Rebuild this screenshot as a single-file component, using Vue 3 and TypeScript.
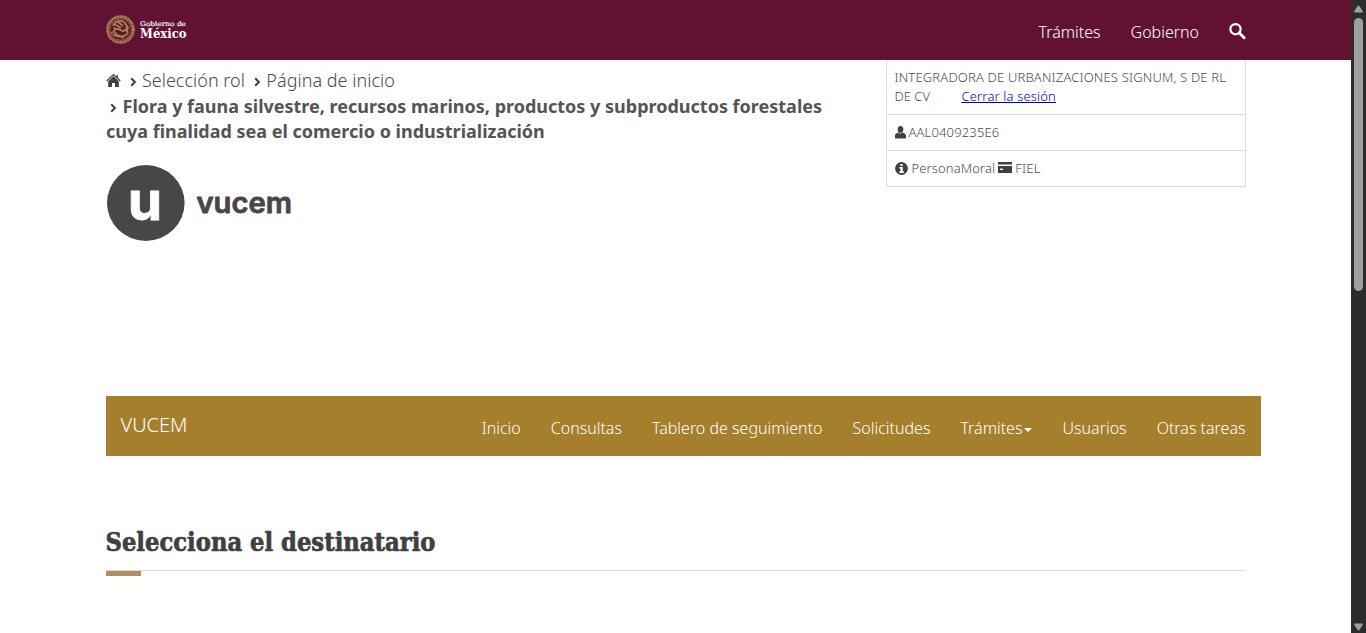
<script setup lang="ts">
interface NavItem {
  label: string
  dropdown?: boolean
}

const siteLinks: string[] = ['Trámites', 'Gobierno']
const crumbs: string[] = ['Selección rol', 'Página de inicio']
const navItems: NavItem[] = [
  { label: 'Inicio' },
  { label: 'Consultas' },
  { label: 'Tablero de seguimiento' },
  { label: 'Solicitudes' },
  { label: 'Trámites', dropdown: true },
  { label: 'Usuarios' },
  { label: 'Otras tareas' },
]
</script>

<template>
  <div class="window">
    <div class="page">
      <header class="topbar">
        <svg class="gov-logo" width="84" height="32" viewBox="0 0 84 32" aria-label="Gobierno de México">
          <g fill="none" stroke="#a5824f">
            <circle cx="14.5" cy="15.5" r="12.9" stroke-width="2.8" stroke-dasharray="2.3 .4" />
            <circle cx="14.5" cy="15.5" r="10.8" stroke-width=".8" />
            <path d="M7 12c2-5 8-7 12-3 3 3 2 7-1 8-4 1-4-3-7-2-3 0-3 4-6 4M8 10l7 4M7 14l8 2M11 7l6 5M17 16c5 0 6 3 3 5-4 2-9 2-13-1M9 18c2 5 8 6 12 2M11 21l7 3M19 10l3 3-1 5" stroke-width="1.7" />
          </g>
          <g fill="#fff" stroke="#fff" font-family="'DejaVu Serif', serif">
            <text x="34" y="12.2" font-size="6.6" stroke-width=".15" textLength="46" lengthAdjust="spacingAndGlyphs">Gobierno de</text>
            <text x="34" y="23.6" font-size="12.6" font-weight="700" stroke-width="0" textLength="46.5" lengthAdjust="spacingAndGlyphs">México</text>
          </g>
        </svg>
        <nav class="site-links">
          <a v-for="link in siteLinks" :key="link">{{ link }}</a>
          <svg width="17" height="17" viewBox="0 0 17 17" aria-label="Buscar">
            <circle cx="6.5" cy="6.2" r="5.1" fill="none" stroke="#fff" stroke-width="2.2" />
            <path d="M10.1 9.8l5 4.9" stroke="#fff" stroke-width="3" stroke-linecap="round" />
          </svg>
        </nav>
      </header>

      <main class="container">
        <section class="intro">
          <div class="intro-left">
            <div class="breadcrumb">
              <div class="crumb-row">
                <svg class="home" width="15" height="15" viewBox="0 0 15 15">
                  <path d="M.7 8L7.5 1.5 14.3 8M11.3 2v3" fill="none" stroke="#404041" stroke-width="1.2" />
                  <path d="M2.2 8.2L7.5 3.2l5.3 5V14H9V10H6v4H2.2z" fill="#404041" />
                </svg>
                <template v-for="crumb in crumbs" :key="crumb">
                  <svg class="chev" width="7" height="10" viewBox="0 0 7 10"><path d="M1.2 1.2L4.9 5 1.2 8.8" /></svg>
                  <a class="crumb">{{ crumb }}</a>
                </template>
              </div>
              <div class="current">
                <svg class="chev inline" width="7" height="10" viewBox="0 0 7 10"><path d="M1.2 1.2L4.9 5 1.2 8.8" /></svg><span>Flora y fauna silvestre, recursos marinos, productos y subproductos forestales</span><br><span>cuya finalidad sea el comercio o industrialización</span>
              </div>
            </div>
            <svg class="brand" width="190" height="78" viewBox="0 0 190 78" aria-label="vucem">
              <ellipse cx="39.8" cy="39" rx="38.8" ry="38" fill="#474747" />
              <text x="21.8" y="55.8" fill="#fff" stroke="#fff" stroke-width=".8" font-family="Inter, sans-serif" font-weight="700" font-size="54" textLength="34.4" lengthAdjust="spacingAndGlyphs">u</text>
              <text x="90.5" y="49" fill="#474747" stroke="#474747" stroke-width=".8" stroke-linejoin="round" font-family="Inter, sans-serif" font-weight="600" font-size="28.5" textLength="95.5" lengthAdjust="spacingAndGlyphs">vucem</text>
            </svg>
          </div>

          <aside class="session">
            <div class="cell first">
              <div class="company">INTEGRADORA DE URBANIZACIONES SIGNUM, S DE RL</div>
              <div class="logout-row"><span class="company-end">DE CV</span><a class="logout">Cerrar la sesión</a></div>
            </div>
            <div class="cell">
              <svg width="11" height="13" viewBox="0 0 11 13" fill="#404041">
                <ellipse cx="5.5" cy="3.4" rx="2.8" ry="3.4" />
                <path d="M0 12.5V9.5C0 7.8 1.6 7.3 3.2 6.5 4.4 7.7 6.6 7.7 7.8 6.5 9.4 7.3 11 7.8 11 9.5v3z" />
              </svg>
              <span class="rfc">AAL0409235E6</span>
            </div>
            <div class="cell">
              <svg width="13" height="13" viewBox="0 0 13 13">
                <circle cx="6.5" cy="6.5" r="6.4" fill="#404041" />
                <path d="M5.4 1.9h2.3v2H5.4zM4.4 5.1h3.4v4.2h1V11H4.4V9.3h1V6.6h-1z" fill="#fff" />
              </svg>
              <span class="kind">PersonaMoral</span>
              <svg class="card" width="14" height="11" viewBox="0 0 14 11">
                <path d="M0 0h14v2.4H0zM0 4h14v7H0z" fill="#404041" />
                <path d="M2 6.6h3v1.4H2z" fill="#fff" />
              </svg>
              <span class="fiel">FIEL</span>
            </div>
          </aside>
        </section>

        <nav class="subnav">
          <a class="nav-brand">VUCEM</a>
          <div class="nav-items">
            <a v-for="item in navItems" :key="item.label">{{ item.label }}<i v-if="item.dropdown" class="caret" /></a>
          </div>
        </nav>

        <section class="heading">
          <svg width="360" height="48" viewBox="0 0 360 48" role="heading" aria-level="2">
            <text x="-0.5" y="28.8" textLength="330" lengthAdjust="spacingAndGlyphs">Selecciona el destinatario</text>
          </svg>
        </section>
      </main>
    </div>

    <div class="scrollbar">
      <svg width="9" height="8" viewBox="0 0 9 8"><path d="M3.8.8h1.4L9 6.5 8.4 7.5H.6L0 6.5z" /></svg>
      <div class="track"><div class="thumb" /></div>
      <svg width="9" height="8" viewBox="0 0 9 8"><path d="M3.8 7.2h1.4L9 1.5 8.4.5H.6L0 1.5z" /></svg>
    </div>
  </div>
</template>

<style>
body {
  margin: 0;
  overflow: hidden;
}
</style>

<style scoped>
.window {
  display: flex;
  height: 633px;
  overflow: hidden;
  background: #fff;
  color: #4a4a4a;
  font-family: "Noto Sans", "Open Sans", sans-serif;
  font-weight: 300;
}
.window * { box-sizing: border-box; }
svg { display: block; flex: none; overflow: visible; }
.page { width: 1351px; }
.topbar {
  display: flex;
  justify-content: space-between;
  height: 60px;
  padding: 14px 105px 0 106px;
  background: #611232;
}
.site-links {
  display: flex;
  gap: 30px;
  font-size: 16px;
  line-height: 22px;
  padding-top: 7px;
  color: #fff;
  white-space: nowrap;
}
.site-links svg { margin-top: 2px; }
.container { width: 1155px; margin-left: 106px; }
.intro { display: flex; height: 336px; }
.intro-left { width: 780px; flex: none; white-space: nowrap; }
.breadcrumb { padding-top: 8px; font-size: 18px; line-height: 25px; }
.crumb-row { display: flex; align-items: center; height: 25px; }
.home { margin-left: -0.5px; }
.crumb { letter-spacing: .02px; }
.chev { fill: none; stroke: #404041; stroke-width: 2; margin: 3px 5px 0 9.4px; }
.chev.inline { display: inline-block; margin: 0 5.5px 0 4px; }
.current { font-weight: 700; padding-top: 1px; color: #545454; }
.brand { margin-top: 20px; }
.session {
  width: 360px;
  height: 127px;
  border: 1px solid #ddd;
  border-top: 0;
  font-size: 13px;
  line-height: 19px;
  white-space: nowrap;
}
.cell {
  display: flex;
  align-items: center;
  height: 36px;
  padding: 0 7.5px;
  border-top: 1px solid #ddd;
}
.cell.first { display: block; height: 54px; padding-top: 8px; border-top: 0; }
.company { letter-spacing: .17px; }
.rfc { margin-left: 3px; letter-spacing: .15px; }
.kind { margin: 0 3px 0 4px; letter-spacing: .12px; }
.card { margin-top: -2px; }
.fiel { margin-left: 3px; letter-spacing: .2px; }
.logout-row { display: flex; gap: 31.5px; }
.logout { color: #0000cd; text-decoration: underline; letter-spacing: .16px; }
.subnav {
  display: flex;
  justify-content: space-between;
  height: 60px;
  padding: 0 15.5px 0 14.5px;
  background: #a57f2c;
  color: #fff;
  white-space: nowrap;
}
.nav-brand { font-size: 20px; line-height: 58px; }
.nav-items { display: flex; gap: 30px; font-size: 16px; line-height: 64px; }
.caret {
  display: inline-block;
  margin-left: 2px;
  vertical-align: middle;
  border-top: 4px solid #fff;
  border-left: 4px solid transparent;
  border-right: 4px solid transparent;
}
.heading { width: 1140px; margin-top: 66px; }
.heading text {
  fill: #404041;
  stroke: #404041;
  stroke-width: .7;
  stroke-linejoin: round;
  font: 700 26px "DejaVu Serif", serif;
}
.heading::after {
  content: "";
  display: block;
  height: 6px;
  border-top: 1px solid #ddd;
  background: linear-gradient(#b38e5d, #b38e5d) 0 0 / 35px 5px no-repeat;
}
.scrollbar {
  display: flex;
  flex-direction: column;
  align-items: center;
  width: 15px;
  padding: 5px 0 2px;
  background: #2c2c2c;
}
.scrollbar svg { fill: #9f9f9f; }
.track { flex: 1; padding-top: 5px; }
.thumb { width: 9px; height: 273px; border-radius: 5px; background: #9f9f9f; }
</style>
